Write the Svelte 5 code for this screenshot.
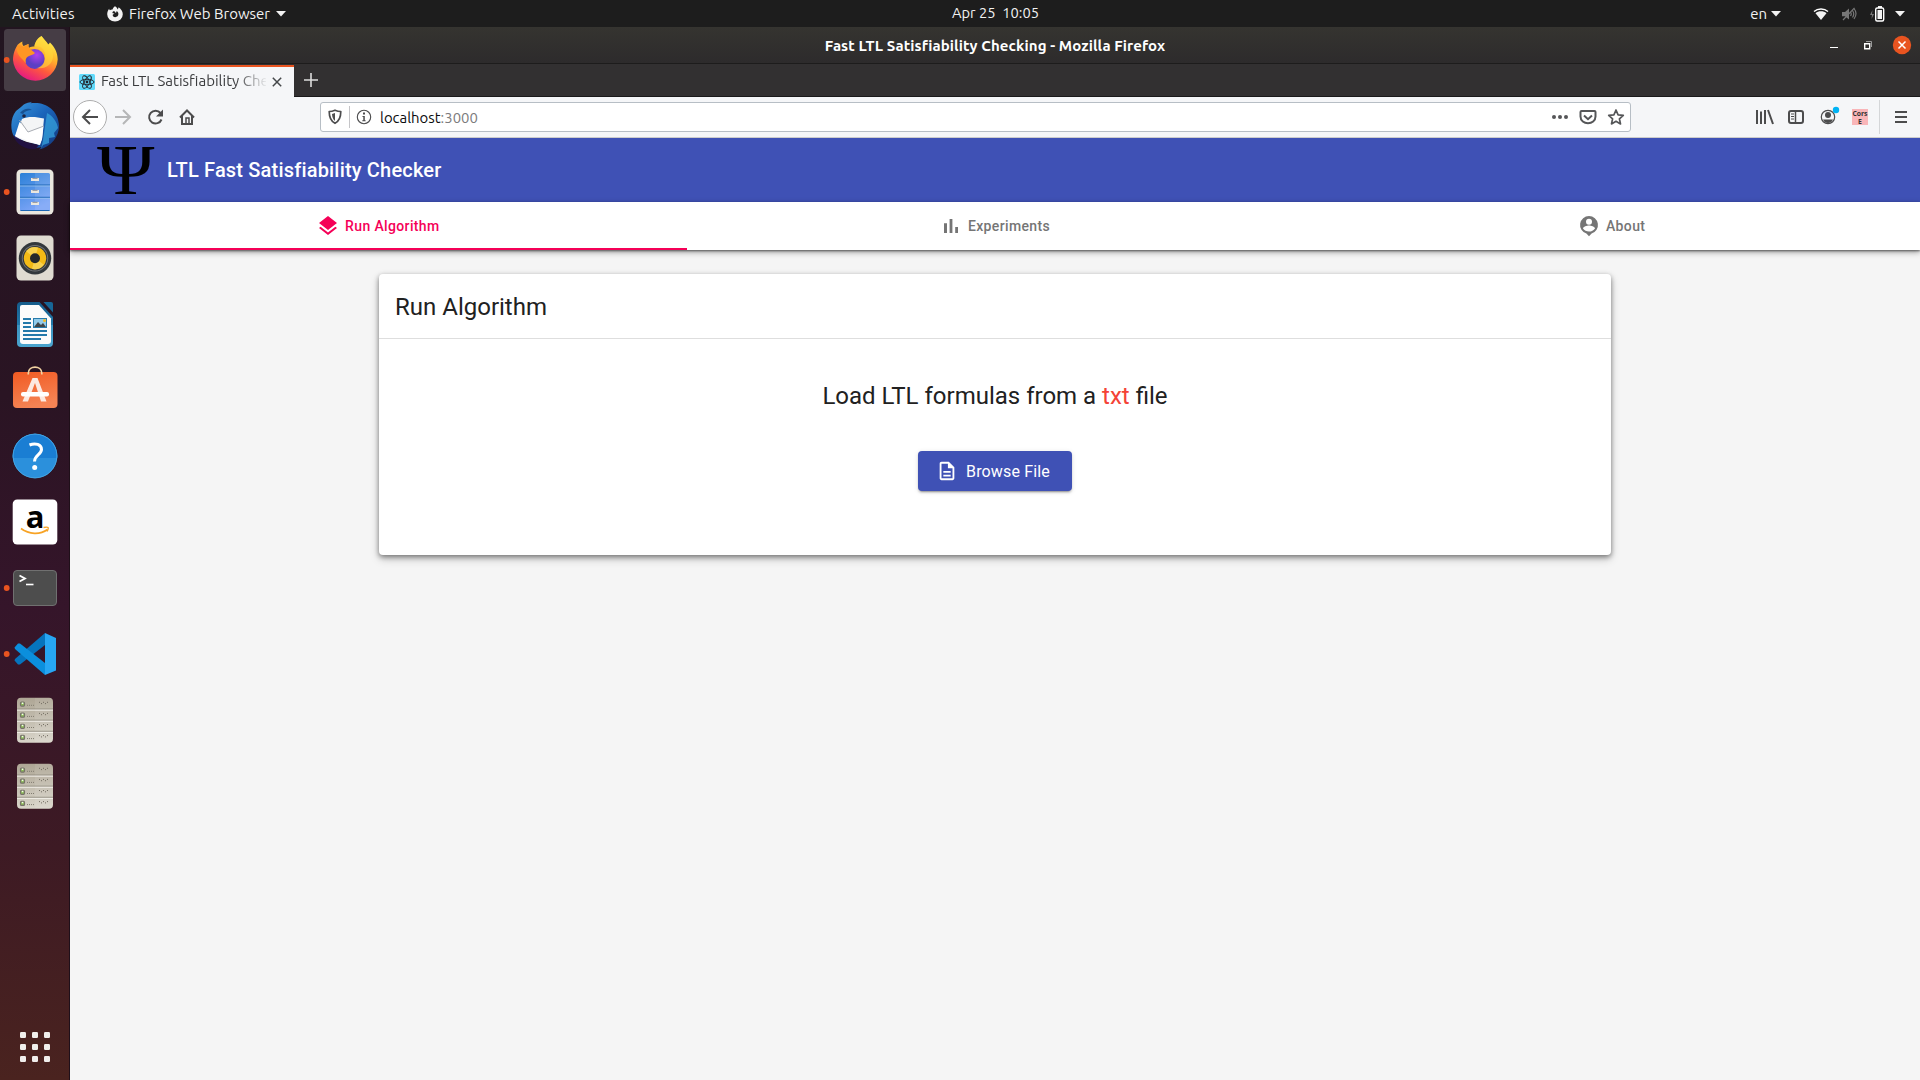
<script>
  const pages = [
    { label: 'Run Algorithm', active: true, d: 'M11.99 18.54l-7.37-5.73L3 14.07l9 7 9-7-1.63-1.27-7.38 5.74zM12 16l7.36-5.73L21 9l-9-7-9 7 1.63 1.27L12 16z' },
    { label: 'Experiments', active: false, d: 'M5 9.2h3V19H5zM10.6 5h2.8v14h-2.8zm5.6 8H19v6h-2.8z' },
    { label: 'About', active: false, d: 'M12 2a9 9 0 0 0-2.6 17.6L12 22.3l2.6-2.7A9 9 0 0 0 12 2zm0 2.7a3 3 0 1 1 0 6 3 3 0 0 1 0-6zm0 12.9c-2.5 0-4.7-1.3-6-3.1.1-2 4-3 6-3s5.9 1 6 3a7.300 7.300 0 0 1-6 3.100z' }
  ];
  const dots = [0, 1, 2];
  const rows = [0, 1, 2, 3];
</script>

{#snippet running()}<circle cx="6.700" cy="33" r="2.900" fill="#e95420" />{/snippet}

{#snippet server()}
  <svg class="app" viewBox="0 0 70 66">
    <defs><linearGradient id="srv" x2="0" y2="1"><stop stop-color="#aea695" /><stop offset="1" stop-color="#d9d5ca" /></linearGradient></defs>
    <rect x="17" y="10.700" width="36" height="45" rx="4" fill="url(#srv)" />
    <path d="M35 11h14a4 4 0 0 1 4 4v36a4 4 0 0 1-4 4H35z" fill="#fff" opacity=".08" />
    {#each rows as r}
      {#if r > 0}
        <rect x="17" y={10.5 + r * 11.1} width="36" height="1" fill="#8d877b" />
        <rect x="17" y={11.5 + r * 11.1} width="36" height="1" fill="#f5f3ed" />
      {/if}
      <rect x="20.500" y={15.1 + r * 11.1} width="4" height="4" rx="1" fill="#8cb85a" stroke="#77736a" stroke-width="1.200" />
      <rect x="21.800" y={15.5 + r * 11.1} width="1.500" height="1.500" fill="#f4ffe8" />
      <path d="M27 {18.3 + r * 11.1}h8" stroke="#817c70" stroke-dasharray="1 1" />
      <path d="M39 {15.3 + r * 11.1}h1m3 0h1m3 0h1M41 {16.6 + r * 11.1}h1m3 0h1" stroke="#746f64" />
    {/each}
  </svg>
{/snippet}

<div class="desktop">
  <header class="topbar">
    <span class="activities">Activities</span>
    <svg class="ff-mono" viewBox="0 0 16 16"><path d="M8 .2c1.700 1 2.300 2 2.500 3.200.8-.7 1-1.400 1.100-2.100C14.300 3.200 15.800 5.500 15.800 8.300A7.800 7.300 0 0 1 .2 8.300C.2 6 1 4.200 2.100 2.700c.2.8.4 1.100.8 1.500.7-.4 1.600-.7 2.600-.6C6 2 7 .9 8 .2zM6 5.500c-.6.500-.7 1.200-.3 1.800L7.500 7.600 5.700 8.700C5.600 10 6.600 11.200 8.200 11.200c1.900 0 3.200-1.400 3.200-3.100 0-1.300-.7-2.400-1.900-3 .2 1-.2 1.600-.9 1.800C8.300 5.600 7 5 6 5.500z" fill-rule="evenodd" /></svg>
    <span class="app-name">Firefox Web Browser</span>
    <svg class="caret" viewBox="0 0 10 6"><path d="M0 0h10L5 5.500z" /></svg>
    <span class="clock">Apr 25&nbsp; 10:05</span>
    <div class="status">
      <span class="lang">en</span>
      <svg class="caret" viewBox="0 0 10 6"><path d="M0 0h10L5 5.500z" /></svg>
      <svg class="wifi" viewBox="0 0 16 14"><path d="M1 4.600C4.800 1.200 11.200 1.200 15 4.600" fill="none" stroke="#fff" stroke-width="1.400" /><path d="M2.500 6.200C5.500 3.600 10.500 3.600 13.500 6.200L8 13z" /></svg>
      <svg class="mute" viewBox="0 0 16 14"><path d="M1 5h3l4-3.500v11L4 9.300H1z" fill="#777" /><path d="M9.500 5q1.500 2 0 4M11.500 3.500q2.500 3.500 0 7M13 1.500q4 5 0 10.500M2 13 13.500 .8" fill="none" stroke="#777" stroke-width="1.200" /></svg>
      <svg class="battery" viewBox="0 0 16 16"><path d="M3.500 4 1 9h2l-.5 4L5 8H3z" fill="#777" /><path d="M9 0h4v2H9z" /><rect x="6.700" y="2" width="8" height="13" rx="1.500" fill="none" stroke="#fff" stroke-width="1.400" /><path d="M8.500 4h4.500v9H8.500z" /></svg>
      <svg class="caret last" viewBox="0 0 10 6"><path d="M0 0h10L5 5.500z" /></svg>
    </div>
  </header>

  <div class="workspace">
    <nav class="dock">
      <!-- Firefox -->
      <svg class="app" viewBox="0 0 70 66">
        <defs>
          <linearGradient id="fx" x1=".8" y1=".05" x2=".3" y2="1"><stop stop-color="#fff44f" /><stop offset=".35" stop-color="#ffb52b" /><stop offset=".65" stop-color="#ff5a3c" /><stop offset="1" stop-color="#e31587" /></linearGradient>
          <radialGradient id="fp" cx=".6" cy=".3"><stop stop-color="#b33ff0" /><stop offset="1" stop-color="#5b3fc4" /></radialGradient>
        </defs>
        <rect x="4" y="2" width="62" height="62" rx="3.500" fill="#463d45" />
        {@render running()}
        <path d="M41.500 9c2 2.500 4.500 5 6.500 8.500 1.500-.5 1.500-2 2-2 4.500 4.500 7.700 10 7.700 17A22.400 22.400 0 0 1 13 33c0-6.500 2.400-11.500 4-14 .6-1.600 2.500-3.200 5.500-4.500-.6 1.800 0 3 1 4.500 1.800-.5 3-1.500 5-2 0 1.500-.3 2.800.5 3.700 2-1 3.500-1 5.500-1.100C35 15 37 11.500 41.500 9z" fill="url(#fx)" />
        <circle cx="34.700" cy="32" r="10" fill="url(#fp)" />
        <path d="M17 19c3-1 5 0 6.500 1l5-3v3.500L35 26c-1.500 2-5 2.200-7 3.500-2.500 1.500-2.700 4-2 7C22 31 15 27 17 19z" fill="#ff9623" />
        <path d="M34 19.500c7-1.500 12 3 11 11-.3 6-4 9.500-8 10.500 8 1.500 15-3 16-11 .6-6-3-12-8-16.500L41.500 9C37 12 35 16 34 19.500z" fill="#ffd83c" opacity=".6" />
      </svg>
      <!-- Thunderbird -->
      <svg class="app" viewBox="0 0 70 66">
        <defs><linearGradient id="tb" x2="1" y2="1"><stop stop-color="#3a99dc" /><stop offset=".45" stop-color="#1b65bb" /><stop offset="1" stop-color="#123579" /></linearGradient></defs>
        <path d="M21 14C25 10 28 10 32 8.800l-1.500 1.500C44 8 58 16 59 32c.3 12-8 22-20 24.500l3-2.500-6 1 2-3-13-4-10-3C10 39 10 25 16 18z" fill="url(#tb)" />
        <path d="M47 20c6 3 10 9 11 15l-4 5 1 4-6 1v5l-6 2-2 4 2-9z" fill="#35a1dc" opacity=".75" />
        <path d="m15 44 7-18c7-3 14-2 22-.5L42 46l-2 6-13-3c-4-2-9-3-12-5z" fill="#f4f5f6" />
        <path d="m13 42 12 7 14 3-3 4c-10 1-20-4-23-14z" fill="#20104b" opacity=".8" />
        <path d="M15 43 19.500 29 28 39l15.500-5.500L42 46l-2.500 6z" fill="#fff" />
        <path d="m19.500 27 8.500 12 16-6" fill="none" stroke="#a9adb4" />
        <circle cx="24" cy="23" r="1.800" fill="#1c2443" />
        <path d="M20 20c4-5 9-5 12-3-4 0-7 1-9 4z" fill="#175293" />
      </svg>
      <!-- Files -->
      <svg class="app" viewBox="0 0 70 66">
        <defs><linearGradient id="fl" x2=".4" y2="1"><stop stop-color="#2a80d7" /><stop offset="1" stop-color="#7ba4f7" /></linearGradient></defs>
        {@render running()}
        <rect x="16.500" y="10.500" width="37" height="45" rx="4.500" fill="#eae7df" />
        <rect x="20" y="14" width="30" height="38" rx="1.500" fill="url(#fl)" />
        <path d="M35 14h15v38H35z" fill="#fff" opacity=".1" />
        <path d="M20 26h30M20 38.300h30M20.500 51.500h29" stroke="#1c67b5" />
        <path d="M20 27h30M20 39.300h30" stroke="#9bc4ef" stroke-width=".8" />
        {#each dots as n}<path d="M31 {19 + n * 12}h8v3h-8z" fill="#eae7df" /><path d="M32.500 {19.3 + n * 12}h5" stroke="#8c8f94" />{/each}
      </svg>
      <!-- Rhythmbox -->
      <svg class="app" viewBox="0 0 70 66">
        <rect x="16.500" y="10.500" width="37" height="45" rx="4.500" fill="#dfdbd1" />
        <circle cx="35" cy="33.200" r="16.200" fill="#33383c" />
        <circle cx="35" cy="33.200" r="13.200" fill="#747779" />
        <circle cx="35" cy="33.200" r="12.300" fill="#33383c" />
        <circle cx="35" cy="33.200" r="11.200" fill="#f3ba16" />
        <path d="m35 33.200-9-7A11.200 11.200 0 0 1 38 22.500zM35 33.200l9 6.600a11.200 11.200 0 0 1-12 4z" fill="#fadb67" opacity=".7" />
        <circle cx="35" cy="33.200" r="5" fill="#25282b" />
      </svg>
      <!-- Writer -->
      <svg class="app" viewBox="0 0 70 66">
        <defs><linearGradient id="wr" x2="0" y2="1"><stop stop-color="#155b8a" /><stop offset=".5" stop-color="#2279aa" /><stop offset=".51" stop-color="#3b92bf" /><stop offset="1" stop-color="#4aa5cf" /></linearGradient></defs>
        <path d="M21 11h18.500L53 26v26a4 4 0 0 1-4 4H21a4 4 0 0 1-4-4V15a4 4 0 0 1 4-4z" fill="url(#wr)" />
        <path d="M22 14h17l12 13.500V50a3 3 0 0 1-3 3H23a3 3 0 0 1-3-3V16a2 2 0 0 1 2-2z" fill="#fbfbfb" />
        <path d="M43.500 11H51a2 2 0 0 1 2 2v8.500z" fill="#176797" />
        <path d="M23 28h8M23 32h8M23 36h8M23 40h24M23 44h24M23 48h18" stroke="#2479aa" stroke-width="1.800" />
        <rect x="33.500" y="27.500" width="13" height="9" fill="#92cbea" stroke="#277bab" />
        <path d="m34 36 4-5 3 3 2-2 3 4z" fill="#3f4649" /><circle cx="44.500" cy="29.500" r="1.500" fill="#f4ba23" />
      </svg>
      <!-- Software -->
      <svg class="app" viewBox="0 0 70 66">
        <defs><linearGradient id="sw" x2=".3" y2="1"><stop stop-color="#f15a22" /><stop offset="1" stop-color="#f58354" /></linearGradient></defs>
        <rect x="13" y="15" width="44.500" height="36" rx="4" fill="url(#sw)" />
        <path d="M28.300 17.500v-1.300c0-8 13.500-8 13.500 0v1.300" fill="none" stroke="#f2d3a2" stroke-width="1.700" />
        <path d="M32.500 21h5l9 23.500h-5.500L35 26l-7 18.500h-5.500z" fill="#fce9e1" />
        <rect x="21" y="35" width="28" height="4.500" rx="2" fill="#fff" />
      </svg>
      <!-- Help -->
      <svg class="app" viewBox="0 0 70 66">
        <circle cx="35" cy="33" r="22.300" fill="#2b90dc" />
        <path d="M12.700 33a22.300 22.300 0 0 1 44.600 0v2H12.700z" fill="#1a7ed3" />
        <circle cx="35" cy="33" r="21.900" fill="none" stroke="#4cabe5" stroke-width=".8" />
        <path d="M29.500 22c6-2.500 12-.5 12 4.500s-7 5.500-7 12" fill="none" stroke="#fff" stroke-width="3" /><circle cx="34.700" cy="44.500" r="2.500" fill="#fff" />
      </svg>
      <!-- Amazon -->
      <svg class="app" viewBox="0 0 70 66">
        <rect x="12.700" y="10.500" width="44.600" height="45" rx="4.500" fill="#fff" />
        <text x="35" y="38.500" class="amazon" text-anchor="middle">a</text>
        <path d="M21 39.500c8 6 19 6.500 26.500 1" fill="none" stroke="#f7a325" stroke-width="1.700" /><path d="M43.500 38.500c5-1 6-.5 3.500 4" fill="none" stroke="#f7a325" stroke-width="1.300" />
      </svg>
      <!-- Terminal -->
      <svg class="app" viewBox="0 0 70 66">
        {@render running()}
        <rect x="13.500" y="15.500" width="43" height="35" rx="3.500" fill="#4d4d4d" stroke="#707070" />
        <path d="m19.500 20.500 5.500 3-5.500 3" fill="none" stroke="#fff" stroke-width="1.800" /><path d="M26 29.500h7.500" stroke="#fff" stroke-width="1.600" />
      </svg>
      <!-- VS Code -->
      <svg class="app" viewBox="0 0 70 66">
        {@render running()}
        <path d="m14.500 39.500 3.500 4h2L45 24V12L15 38z" fill="#0674bd" />
        <path d="m14.500 26.500 3.500-4h2L45 42v12L15 28z" fill="#0b8fdd" />
        <path d="m45 12 11 5v32.500L45 54z" fill="#27a6f3" />
      </svg>
      {@render server()}
      {@render server()}
      <svg class="launcher" viewBox="0 0 70 66">
        {#each dots as r}{#each dots as c}<rect x={20 + c * 12} y={18 + r * 12} width="6" height="6" rx="1.200" fill="#f0eeec" />{/each}{/each}
      </svg>
    </nav>

    <main class="window">
      <div class="titlebar">
        <span class="title">Fast LTL Satisfiability Checking - Mozilla Firefox</span>
        <svg class="controls" viewBox="0 0 90 20">
          <path d="M5 12.500h8" stroke="#fff" />
          <path d="M41 6.500h5.500V12" fill="none" stroke="#999" /><path d="M39.700 8.700h5v5h-5z" fill="none" stroke="#fff" stroke-width="1.400" />
          <circle cx="77" cy="10" r="9.200" fill="#e95420" /><path d="m73.500 6.500 7 7m0-7-7 7" stroke="#fff" stroke-width="1.500" />
        </svg>
      </div>
      <div class="tabstrip">
        <div class="tab">
          <svg class="react" viewBox="0 0 16 16"><rect width="16" height="16" rx="1.500" fill="#61dafb" /><g fill="none" stroke="#20232a" stroke-width=".9"><ellipse cx="8" cy="8" rx="7" ry="2.700" /><ellipse cx="8" cy="8" rx="7" ry="2.700" transform="rotate(60 8 8)" /><ellipse cx="8" cy="8" rx="7" ry="2.700" transform="rotate(120 8 8)" /></g><circle cx="8" cy="8" r="1.400" fill="#20232a" /></svg>
          <span class="tab-title">Fast LTL Satisfiability Checking</span>
          <svg class="close" viewBox="0 0 10 10"><path d="m.8.8 8.400 8.400m0-8.400L.8 9.200" stroke="#45484a" stroke-width="1.500" /></svg>
        </div>
        <svg class="plus" viewBox="0 0 14 14"><path d="M7 0v14M0 7h14" stroke="#ddd" stroke-width="1.600" /></svg>
      </div>
      <div class="toolbar">
        <svg class="nav" viewBox="0 0 134 40" fill="none" stroke="#4c4c4d" stroke-width="2">
          <circle cx="20" cy="20" r="16.500" fill="#fff" stroke="#adadad" stroke-width="1" />
          <path d="M28 20H13m7-7-7 7 7 7" />
          <path d="M45 20h15m-7-7 7 7-7 7" stroke="#b5b6b7" />
          <path d="M91.500 22.500a6.400 6.400 0 1 1-1-6.500" /><path d="M93 12.500v7h-7z" fill="#4c4c4d" stroke="none" />
          <path d="m110 20.500 7-7 7 7M112 19v8h10v-8" /><path d="M116 27v-6h3v6" stroke-width="1.500" />
        </svg>
        <div class="urlbar">
          <svg class="shield" viewBox="0 0 14 16" fill="none" stroke="#4c4c4d"><path d="M1.200 2.500Q4 2.400 7 1.200q3 1.200 5.800 1.300C12.800 8 11.500 12 7 14.300 2.500 12 1.200 8 1.200 2.500z" stroke-width="1.700" stroke-linejoin="round" /><path d="M7 4v8C5 10.500 4.200 8 4 5z" fill="#4c4c4d" stroke="none" /></svg>
          <span class="sep"></span>
          <svg class="info" viewBox="0 0 16 16"><circle cx="8" cy="8" r="6.700" fill="none" stroke="#4c4c4d" stroke-width="1.100" /><path d="M7 3.600h2v2H7zm-.5 3.400h2.300v4.200h.8v1.100H6.300v-1.100h1V8h-.8z" fill="#4c4c4d" /></svg>
          <span class="url">localhost<span class="port">:3000</span></span>
          <svg class="url-actions" viewBox="0 0 74 20" fill="none" stroke="#555658" stroke-width="2"><g fill="#555658" stroke="none"><circle cx="3" cy="10" r="2" /><circle cx="9" cy="10" r="2" /><circle cx="15" cy="10" r="2" /></g><path d="M30.500 4h13q1 0 1 1v4.500c0 9-15 9-15 0V5q0-1 1-1z" /><path d="m33 8.500 4 3.700 4-3.700" /><path d="m65 3 2.100 4.800 5.200.5-3.900 3.500 1.100 5.100-4.500-2.600-4.500 2.600 1.100-5.100L57.700 8.300l5.200-.5z" stroke-width="1.700" stroke-linejoin="round" /></svg>
        </div>
        <svg class="tools" viewBox="0 0 164 40" fill="none" stroke="#4c4c4d" stroke-width="2">
          <path d="M2 13v14M6 14.500V27M10 13v14M13 13l5 14" /><rect x="34" y="14" width="14" height="12" rx="2" /><path d="M40.500 14v12" stroke-width="1.500" /><path d="M36 17h3m-3 2.500h3m-3 2.500h3" stroke-width="1" />
          <circle cx="73" cy="20" r="6.700" stroke-width="1.200" /><g fill="#4c4c4d" stroke="none"><circle cx="73" cy="18" r="3" /><path d="M68 22.500h10q-1.500 3.500-5 3.500t-5-3.500z" /><circle cx="81" cy="13" r="3.200" fill="#00b3f4" /></g>
          <rect x="97" y="12" width="16" height="16" fill="#f9b5b8" stroke="none" /><text class="cors" x="105" y="18.500" text-anchor="middle">Cors</text><text class="cors" x="105" y="26.500" text-anchor="middle">E</text>
          <path d="M124.500 3v34" stroke="#d4d6d8" stroke-width="1" /><path d="M140 15h12m-12 5h12m-12 5h12" />
        </svg>
      </div>

      <div class="page">
        <div class="appbar">
          <span class="psi">Ψ</span>
          <h1>LTL Fast Satisfiability Checker</h1>
        </div>
        <div class="tabs">
          {#each pages as p}
            <div class="page-tab" class:active={p.active}>
              <svg viewBox="0 0 24 24"><path d={p.d} /></svg><span>{p.label}</span>
            </div>
          {/each}
        </div>
        <section class="card">
          <h2>Run Algorithm</h2>
          <div class="card-body">
            <p>Load LTL formulas from a <span class="txt">txt</span> file</p>
            <button>
              <svg viewBox="0 0 24 24"><path d="M8 16h8v2H8zm0-4h8v2H8zm6-10H6c-1.100 0-2 .9-2 2v16c0 1.100.89 2 1.990 2H18c1.100 0 2-.9 2-2V8l-6-6zm4 18H6V4h7v5h5v11z" /></svg>
              <span>Browse File</span>
            </button>
          </div>
        </section>
      </div>
    </main>
  </div>
</div>

<style>
  :global(body) { margin: 0; overflow: hidden; }
  * { box-sizing: border-box; }
  svg { display: block; flex: none; }
  .desktop { width: 1920px; height: 1080px; display: flex; flex-direction: column; font-family: Ubuntu, "Noto Sans", sans-serif; font-size: 15px; white-space: nowrap; }

  .topbar { height: 27px; flex: none; display: grid; grid-template-columns: 75px 41px auto auto 1fr auto; align-items: center; background: #1d1d1d; color: #f2f2f2; fill: #f2f2f2; position: relative; }
  .activities { padding-left: 12px; letter-spacing: .1px; }
  .ff-mono { width: 16px; height: 16px; margin-left: 32px; }
  .app-name { margin-left: 13px; }
  .caret { width: 10px; height: 6px; margin-left: 6px; }
  .clock { position: absolute; left: 952px; top: 4px; font-size: 14.667px; }
  .status { grid-column: 6; display: flex; align-items: center; }
  .lang { margin-right: -1px; }
  .lang + .caret { margin-left: 5px; }
  .wifi { width: 16px; height: 14px; margin-left: 32px; }
  .mute { width: 16px; height: 14px; margin-left: 12px; }
  .battery { width: 16px; height: 16px; margin-left: 12px; }
  .last { margin: 0 15px 0 10px; }

  .workspace { flex: 1; display: flex; min-height: 0; }
  .dock { width: 70px; flex: none; display: flex; flex-direction: column; background: linear-gradient(#221520, #2a1423 35%, #35152a 55%, #3d1a24 78%, #4a231f); border-right: 1px solid #1f0f19; }
  .app, .launcher { width: 70px; height: 66px; }
  .launcher { margin-top: auto; }
  .amazon { font: bold 31px "Open Sans", sans-serif; fill: #000; }

  .window { flex: 1; min-width: 0; display: flex; flex-direction: column; }
  .titlebar { height: 37px; flex: none; display: grid; grid-template-columns: 1fr auto 1fr; align-items: center; background: linear-gradient(#353430, #2d2b2c); border-bottom: 1px solid #1d1c1c; color: #fff; font-weight: bold; }
  .title { grid-column: 2; letter-spacing: .09px; }
  .controls { width: 90px; height: 20px; justify-self: end; margin-right: 5px; }
  .tabstrip { height: 33px; flex: none; display: flex; align-items: center; background: #323031; border-bottom: 1px solid #1a191a; }
  .tab { width: 224px; height: 32px; display: flex; align-items: center; padding-left: 9px; background: #f5f6f8; border-top: 2px solid #e95420; color: #3b3c3e; align-self: flex-end; margin-bottom: -1px; }
  .react { width: 16px; height: 16px; }
  .tab-title { width: 165px; margin-left: 6px; padding-bottom: 3px; overflow: hidden; mask-image: linear-gradient(90deg, #000 135px, transparent 167px); }
  .close { width: 10px; height: 10px; margin-left: 6px; }
  .plus { width: 14px; height: 14px; margin-left: 10px; }
  .toolbar { height: 41px; flex: none; display: flex; align-items: center; background: #f5f6f8; border-bottom: 1px solid #ccc; }
  .nav { width: 134px; height: 40px; }
  .urlbar { width: 1311px; height: 30px; margin-left: 116px; display: flex; align-items: center; background: #fff; border: 1px solid #b7bec5; border-radius: 3px; }
  .shield { width: 14px; height: 16px; margin-left: 7px; }
  .sep { width: 1px; height: 22px; margin-left: 7px; background: #c5c5c8; }
  .info { width: 16px; height: 16px; margin-left: 6px; }
  .url { margin-left: 8px; padding-top: 1px; font-size: 14.900px; color: #0c0c0d; }
  .port { color: #7b7b7c; }
  .url-actions { width: 74px; height: 20px; margin-left: auto; margin-right: 5px; }
  .tools { width: 164px; height: 40px; margin-left: auto; margin-right: 1px; }
  .cors { font: bold 6.800px "Open Sans", sans-serif; fill: #333; stroke: none; }

  .page { flex: 1; display: flex; flex-direction: column; background: #f5f5f5; font-family: Roboto, sans-serif; }
  .appbar { height: 64px; flex: none; display: flex; align-items: center; padding-left: 27px; background: #3f51b5; color: #fff; }
  .psi { width: 60px; font: 72px/64px "Liberation Serif", serif; color: #000; transform: scaleX(1.08); transform-origin: left; }
  h1 { margin: 0 0 0 10px; font-size: 20px; font-weight: 500; letter-spacing: .009em; }
  .tabs { height: 48px; flex: none; display: grid; grid-template-columns: repeat(3, 1fr); background: #fff; box-shadow: 0 1px 2px rgba(0, 0, 0, .5), 0 2px 6px rgba(0, 0, 0, .38); }
  .page-tab { display: flex; justify-content: center; align-items: center; gap: 5px; padding: 2px 1px 0 0; border-bottom: 2px solid transparent; color: #757575; fill: #757575; font-size: 14px; font-weight: 500; letter-spacing: .026em; }
  .page-tab.active { color: #f50057; fill: #f50057; border-color: #f50057; }
  .page-tab svg { width: 24px; height: 24px; }
  .card { width: 1232px; height: 281px; margin: 24px 0 0 309px; background: #fff; border-radius: 4px; box-shadow: 0 2px 5px rgba(0, 0, 0, .42), 0 4px 10px rgba(0, 0, 0, .2); color: #212121; }
  h2 { height: 65px; margin: 0; padding-left: 16px; border-bottom: 1px solid #dedede; font-size: 24px; font-weight: 400; line-height: 67px; }
  .card-body { display: flex; flex-direction: column; align-items: center; padding-top: 41px; }
  p { margin: 0; font-size: 24px; line-height: 32px; }
  .txt { color: #f44336; }
  button { height: 40px; margin-top: 39px; padding: 0 22px 0 18px; display: flex; align-items: center; gap: 8px; border: 0; border-radius: 4px; background: #3f51b5; color: #fff; fill: #fff; font: 400 16px Roboto, sans-serif; letter-spacing: .00938em; box-shadow: 0 3px 1px -2px rgba(0, 0, 0, .2), 0 2px 2px rgba(0, 0, 0, .14), 0 1px 5px rgba(0, 0, 0, .12); }
  button svg { width: 22px; height: 22px; }
</style>
